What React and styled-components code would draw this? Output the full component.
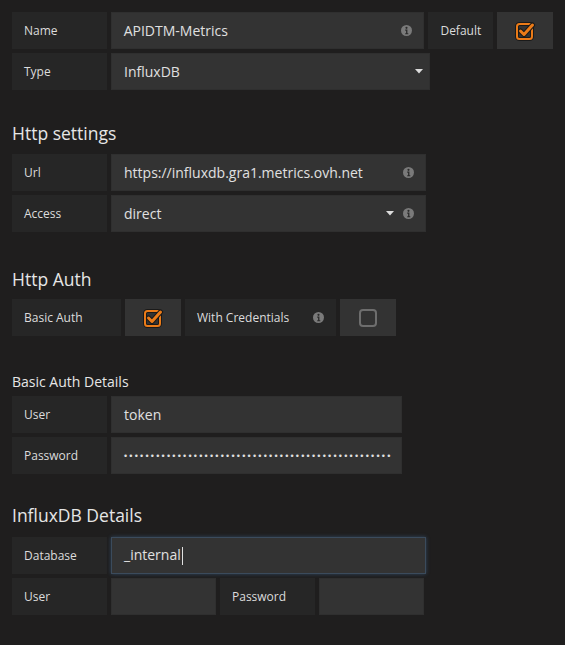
import React from 'react';
import styled, { createGlobalStyle, css } from 'styled-components';

const GlobalStyle = createGlobalStyle`
  html, body {
    margin: 0;
    background: #1f1e1e;
  }
  body {
    font-family: "Open Sans", "Liberation Sans", sans-serif;
    color: #d8d9da;
  }
`;

const Page = styled.div`
  box-sizing: border-box;
  min-height: 645px;
  padding: 12px 12px 20px;
`;

const Group = styled.div`
  display: flex;
  flex-direction: column;
  gap: 4px;
`;

const Row = styled.div`
  display: flex;
  gap: 4px;
`;

const Heading = styled.h3`
  margin: ${(p) => p.$top}px 0 ${(p) => p.$bottom}px;
  font-size: ${(p) => (p.$small ? 14 : 17.5)}px;
  line-height: 1;
  font-weight: 400;
  color: #e6e6e6;
`;

const Label = styled.div`
  box-sizing: border-box;
  width: ${(p) => p.$w}px;
  height: 37px;
  padding: 0 12px;
  display: flex;
  align-items: center;
  justify-content: space-between;
  background: #262626;
  font-size: 12px;
  color: #dcdcdc;
`;

const Field = styled.div`
  box-sizing: border-box;
  width: ${(p) => p.$w}px;
  height: 37px;
  padding: 0 ${(p) => p.$pr ?? 11}px 0 12px;
  display: flex;
  align-items: center;
  justify-content: space-between;
  background: #333333;
  border: 1px solid #2f2f2f;
  font-size: 14px;
  color: #e0e0e0;
  ${(p) =>
    p.$focus &&
    css`
      border-color: #3b4b5c;
      box-shadow: 0 0 4px rgba(82, 150, 220, 0.35);
    `}
`;

const CheckCell = styled.div`
  width: 56px;
  height: 37px;
  display: flex;
  align-items: center;
  justify-content: center;
  background: #333333;
`;

const Icons = styled.div`
  display: flex;
  align-items: center;
  gap: 9px;
`;

const Dots = styled.span`
  font-family: "Liberation Sans", sans-serif;
  font-size: 9px;
  letter-spacing: 2.22px;
  color: #e0e0e0;
`;

const Cursor = styled.span`
  display: inline-block;
  width: 1px;
  height: 18px;
  margin-left: 1px;
  background: #e0e0e0;
  vertical-align: middle;
`;

const Info = () => (
  <svg width="11" height="11" viewBox="0 0 11 11">
    <circle cx="5.5" cy="5.5" r="5.5" fill="#7a7a7a" />
    <circle cx="5.5" cy="2.8" r="1.1" fill="#2b2b2b" />
    <path d="M4.2 4.6h2.2v3.6h0.9v1.1H4.2V8.2h0.9V5.7h-0.9z" fill="#2b2b2b" />
  </svg>
);

const Caret = () => (
  <svg width="8" height="5" viewBox="0 0 8 5">
    <path d="M0 0h8L4 4.5z" fill="#dcdcdc" />
  </svg>
);

const Checkbox = ({ checked }) =>
  checked ? (
    <svg width="22" height="21" viewBox="0 0 22 21">
      <rect x="3" y="4" width="15" height="15" rx="2.5" fill="none" stroke="#1a1a1a" strokeWidth="4" />
      <rect x="3" y="4" width="15" height="15" rx="2.5" fill="none" stroke="#eb7b18" strokeWidth="2" />
      <path d="M6.5 11l3.5 3.5 8.5-9.5" fill="none" stroke="#1a1a1a" strokeWidth="5" strokeLinecap="round" strokeLinejoin="round" />
      <path d="M6.5 11l3.5 3.5 8.5-9.5" fill="none" stroke="#eb7b18" strokeWidth="3" strokeLinecap="round" strokeLinejoin="round" />
    </svg>
  ) : (
    <svg width="20" height="20" viewBox="0 0 20 20">
      <rect x="2" y="2" width="16" height="16" rx="3" fill="none" stroke="#6e6e6e" strokeWidth="2" />
    </svg>
  );

export default function App() {
  return (
    <Page>
      <GlobalStyle />
      <Group>
        <Row>
          <Label $w={95}>Name</Label>
          <Field $w={315}>
            APIDTM-Metrics
            <Info />
          </Field>
          <Label $w={65}>Default</Label>
          <CheckCell>
            <Checkbox checked />
          </CheckCell>
        </Row>
        <Row>
          <Label $w={95}>Type</Label>
          <Field $w={319} $pr={6}>
            InfluxDB
            <Caret />
          </Field>
        </Row>
      </Group>

      <Heading $top={35} $bottom={11}>Http settings</Heading>
      <Group>
        <Row>
          <Label $w={95}>Url</Label>
          <Field $w={315}>
            https://influxdb.gra1.metrics.ovh.net
            <Info />
          </Field>
        </Row>
        <Row>
          <Label $w={95}>Access</Label>
          <Field $w={315}>
            direct
            <Icons>
              <Caret />
              <Info />
            </Icons>
          </Field>
        </Row>
      </Group>

      <Heading $top={39} $bottom={11}>Http Auth</Heading>
      <Row>
        <Label $w={109}>Basic Auth</Label>
        <CheckCell>
          <Checkbox checked />
        </CheckCell>
        <Label $w={151}>
          With Credentials
          <Info />
        </Label>
        <CheckCell>
          <Checkbox />
        </CheckCell>
      </Row>

      <Heading $small $top={39} $bottom={7}>Basic Auth Details</Heading>
      <Group>
        <Row>
          <Label $w={95}>User</Label>
          <Field $w={291}>token</Field>
        </Row>
        <Row>
          <Label $w={95}>Password</Label>
          <Field $w={291}>
            <Dots>{'•'.repeat(50)}</Dots>
          </Field>
        </Row>
      </Group>

      <Heading $top={33} $bottom={12}>InfluxDB Details</Heading>
      <Group>
        <Row>
          <Label $w={95}>Database</Label>
          <Field $w={315} $focus>
            <span>
              _internal
              <Cursor />
            </span>
          </Field>
        </Row>
        <Row>
          <Label $w={95}>User</Label>
          <Field $w={105} />
          <Label $w={95}>Password</Label>
          <Field $w={105} />
        </Row>
      </Group>
    </Page>
  );
}
